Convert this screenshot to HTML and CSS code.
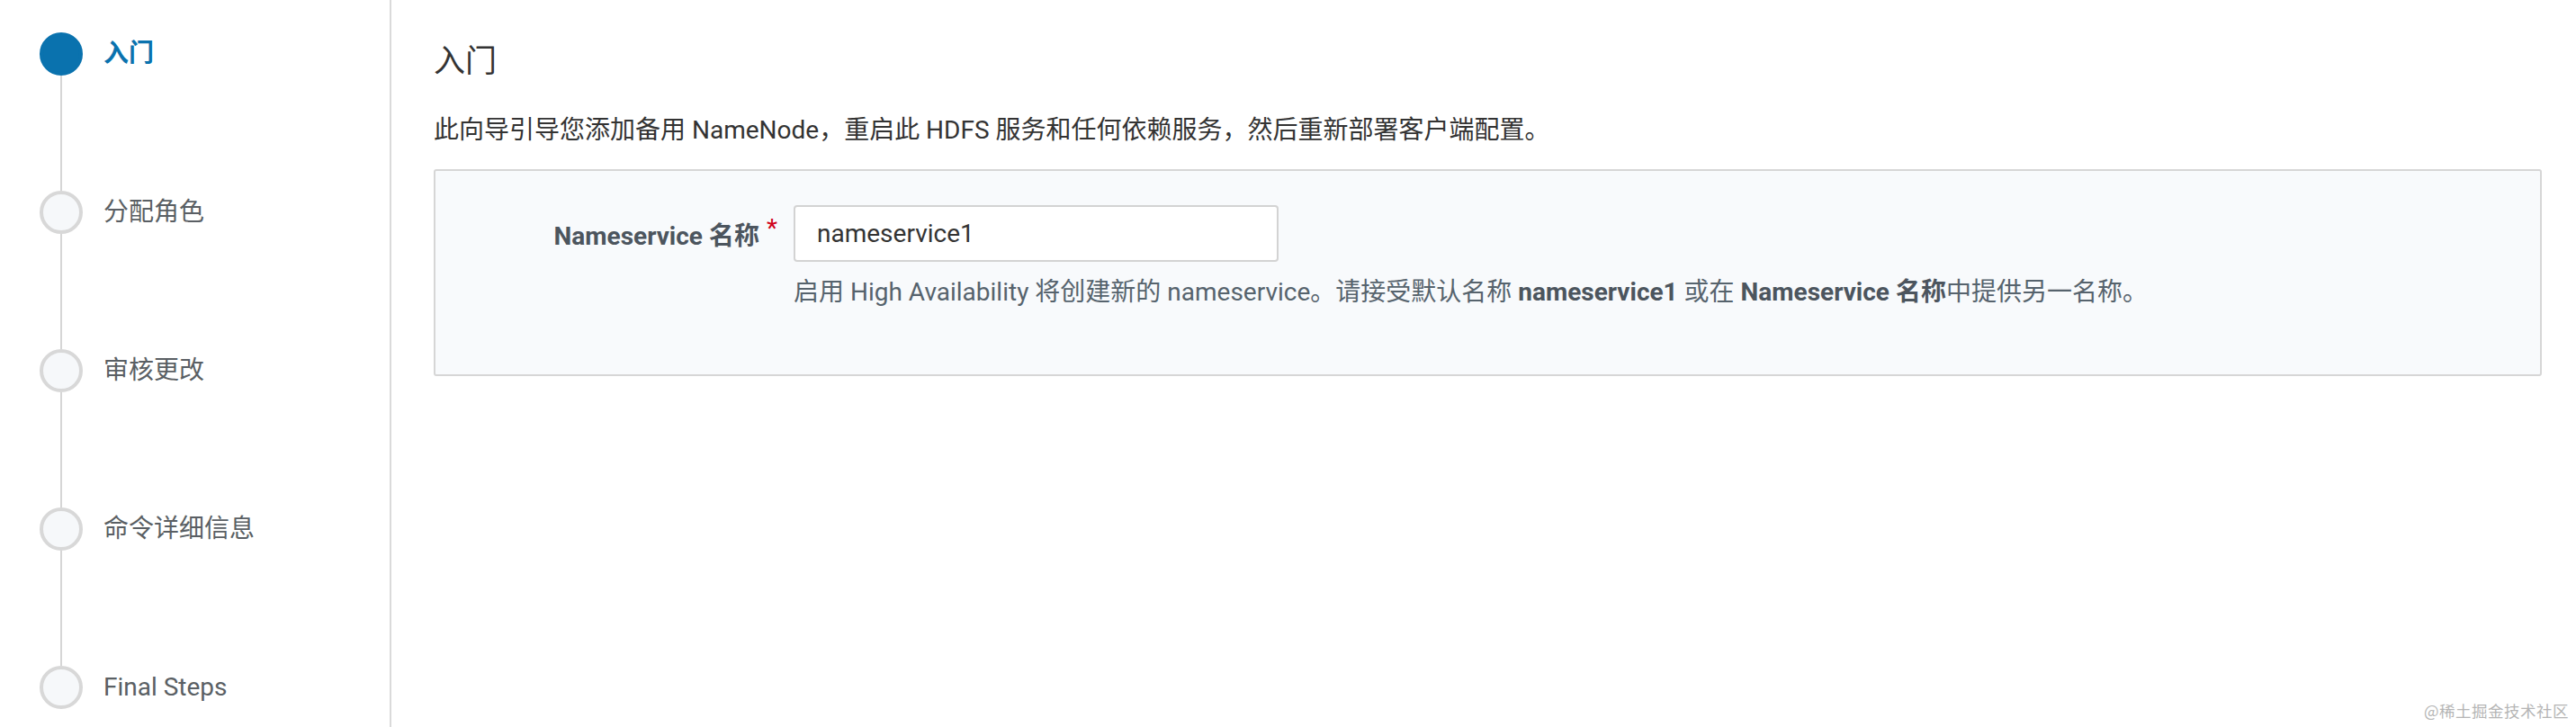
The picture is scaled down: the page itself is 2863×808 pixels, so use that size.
FILE: index.html
```html
<!DOCTYPE html>
<html lang="zh-CN">
<head>
<meta charset="utf-8">
<title>启用 High Availability</title>
<link rel="stylesheet" href="styles.css">
</head>
<body>
<div class="page">
  <aside class="sidebar">
    <ol class="steps">
      <li class="step active">
        <div class="marker"><span class="dot"></span><span class="link"></span></div>
        <span class="step-label">入门</span>
      </li>
      <li class="step">
        <div class="marker"><span class="dot"></span><span class="link"></span></div>
        <span class="step-label">分配角色</span>
      </li>
      <li class="step">
        <div class="marker"><span class="dot"></span><span class="link"></span></div>
        <span class="step-label">审核更改</span>
      </li>
      <li class="step">
        <div class="marker"><span class="dot"></span><span class="link"></span></div>
        <span class="step-label">命令详细信息</span>
      </li>
      <li class="step last">
        <div class="marker"><span class="dot"></span></div>
        <span class="step-label">Final Steps</span>
      </li>
    </ol>
  </aside>
  <main class="content">
    <h1 class="title">入门</h1>
    <p class="intro">此向导引导您添加备用 NameNode，重启此 HDFS 服务和任何依赖服务，然后重新部署客户端配置。</p>
    <section class="panel">
      <div class="form-row">
        <label class="field-label" for="ns">Nameservice 名称<span class="req">*</span></label>
        <div class="field">
          <input id="ns" class="text-input" type="text" value="nameservice1">
          <p class="help">启用 High Availability 将创建新的 nameservice。请接受默认名称 <b>nameservice1</b> 或在 <b>Nameservice 名称</b>中提供另一名称。</p>
        </div>
      </div>
    </section>
  </main>
</div>
<div class="watermark">@稀土掘金技术社区</div>
</body>
</html>
```
FILE: styles.css
```css
html, body {
  margin: 0;
  padding: 0;
  background: #ffffff;
}
body {
  font-family: Roboto, "Noto Sans CJK SC", "Noto Sans", sans-serif;
  color: #333333;
  font-size: 28px;
  width: 2863px;
  height: 808px;
  overflow: hidden;
  position: relative;
}
.page {
  display: flex;
  height: 808px;
}
.sidebar {
  width: 433px;
  flex: 0 0 433px;
  border-right: 2px solid #dadada;
  box-sizing: content-box;
}
.steps {
  list-style: none;
  margin: 0;
  padding: 36px 0 0 44px;
  display: flex;
  flex-direction: column;
}
.step {
  display: flex;
  align-items: flex-start;
  height: 176px;
}
.step.last {
  height: 48px;
}
.marker {
  width: 48px;
  height: 100%;
  display: flex;
  flex-direction: column;
  align-items: center;
}
.dot {
  width: 48px;
  height: 48px;
  box-sizing: border-box;
  border-radius: 50%;
  border: 4px solid #d8d8d8;
  background: #f6f8fa;
  flex: 0 0 48px;
}
.step.active .dot {
  border-color: #0a72ae;
  background: #0a72ae;
}
.link {
  width: 2px;
  flex: 1;
  background: #d6d6d6;
}
.step-label {
  margin-left: 23px;
  line-height: 48px;
  height: 48px;
  font-size: 28px;
  color: #5a5f64;
  white-space: nowrap;
}
.step.active .step-label {
  color: #0a72ae;
  font-weight: 700;
}
.content {
  flex: 1;
  padding: 0 38px 0 47px;
  min-width: 0;
}
.title {
  margin: 48px 0 0 0;
  font-size: 35px;
  line-height: 42px;
  font-weight: 400;
  color: #333333;
}
.intro {
  margin: 36px 0 0 0;
  line-height: 38px;
  font-size: 28px;
  color: #333333;
}
.panel {
  margin-top: 24px;
  height: 230px;
  box-sizing: border-box;
  border: 2px solid #d6d6d6;
  border-radius: 3px;
  background: #f8fafc;
  padding-top: 38px;
}
.form-row {
  display: grid;
  grid-template-columns: 380px 1fr;
  column-gap: 18px;
  align-items: start;
}
.field-label {
  display: flex;
  justify-content: flex-end;
  align-items: center;
  height: 63px;
  font-weight: 700;
  color: #4c555e;
  font-size: 28px;
  white-space: nowrap;
}
.req {
  color: #d0021b;
  font-weight: 400;
  margin-left: 8px;
  position: relative;
  top: -6px;
}
.field {
  display: flex;
  flex-direction: column;
}
.text-input {
  width: 539px;
  height: 63px;
  box-sizing: border-box;
  border: 2px solid #d3d3d3;
  border-radius: 4px;
  background: #ffffff;
  padding: 0 24px;
  font-family: Roboto, "Noto Sans CJK SC", sans-serif;
  font-size: 28px;
  color: #333333;
  outline: none;
}
.help {
  margin: 15px 0 0 0;
  line-height: 38px;
  font-size: 28px;
  color: #56636d;
  white-space: nowrap;
}
.help b {
  font-weight: 700;
  color: #4c555e;
}
.watermark {
  position: absolute;
  right: 8px;
  bottom: 6px;
  font-family: "Noto Sans CJK SC", sans-serif;
  font-size: 17.5px;
  line-height: 24px;
  color: #b5b5b5;
  letter-spacing: 0.5px;
}
```
